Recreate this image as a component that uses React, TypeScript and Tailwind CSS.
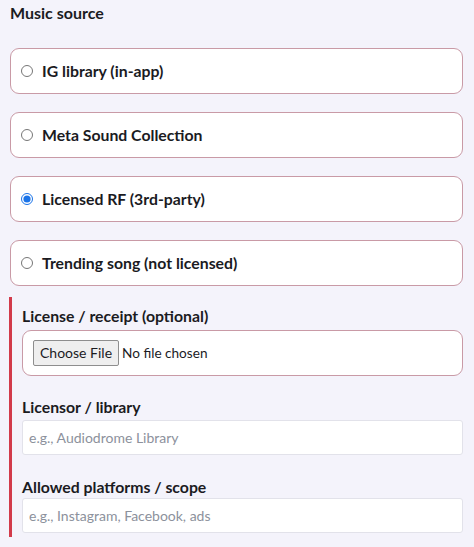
import React from "react";

const options = [
  { label: "IG library (in-app)", checked: false },
  { label: "Meta Sound Collection", checked: false },
  { label: "Licensed RF (3rd-party)", checked: true },
  { label: "Trending song (not licensed)", checked: false },
];

export default function App() {
  return (
    <div
      className="w-[474px] h-[547px] overflow-hidden bg-[#f4f3fb] text-[#1b1b1f] px-[10px] pr-[11px]"
      style={{ fontFamily: "Lato, 'Open Sans', sans-serif" }}
    >
      <div className="pt-[1px] text-[16px] font-bold leading-[24px]">Music source</div>
      <div className="mt-[23px] flex flex-col gap-[18px]">
        {options.map((o) => (
          <label
            key={o.label}
            className="flex items-center h-[46px] bg-white border border-[#c99aa6] rounded-[9px] pl-[10px]"
          >
            <input
              type="radio"
              name="src"
              defaultChecked={o.checked}
              className="w-[12px] h-[12px] m-0 accent-[#1a73e8]"
            />
            <span className="ml-[9px] text-[15.8px] font-bold leading-[20px]">{o.label}</span>
          </label>
        ))}
      </div>
      <div className="mt-[11px] border-l-[3px] border-[#d23a4a] pl-[10px] pt-[9px] pb-[4px] -ml-[1px]">
        <div className="text-[15.8px] font-bold leading-[20px]">License / receipt (optional)</div>
        <div className="mt-[4px] h-[46px] flex items-center bg-white border border-[#c99aa6] rounded-[9px] pl-[10px]">
          <span className="h-[26px] px-[6px] flex items-center bg-[#efefef] border border-[#8e8e8e] rounded-[2px] text-[14px] leading-[20px] text-[#1b1b1f]">
            Choose File
          </span>
          <span className="ml-[3px] text-[13.6px] leading-[20px]">No file chosen</span>
        </div>
        <div className="mt-[21px] text-[15.8px] font-bold leading-[20px]">Licensor / library</div>
        <input
          type="text"
          placeholder="e.g., Audiodrome Library"
          className="mt-[3px] block w-full h-[35px] bg-white border border-[#e2e2ea] rounded-[3px] pl-[6px] text-[14px] placeholder:text-[#8c919c] outline-none"
        />
        <div className="mt-[22px] text-[15.8px] font-bold leading-[20px]">Allowed platforms / scope</div>
        <input
          type="text"
          placeholder="e.g., Instagram, Facebook, ads"
          className="mt-[1px] block w-full h-[35px] bg-white border border-[#e2e2ea] rounded-[3px] pl-[6px] text-[14px] placeholder:text-[#8c919c] outline-none"
        />
      </div>
    </div>
  );
}
